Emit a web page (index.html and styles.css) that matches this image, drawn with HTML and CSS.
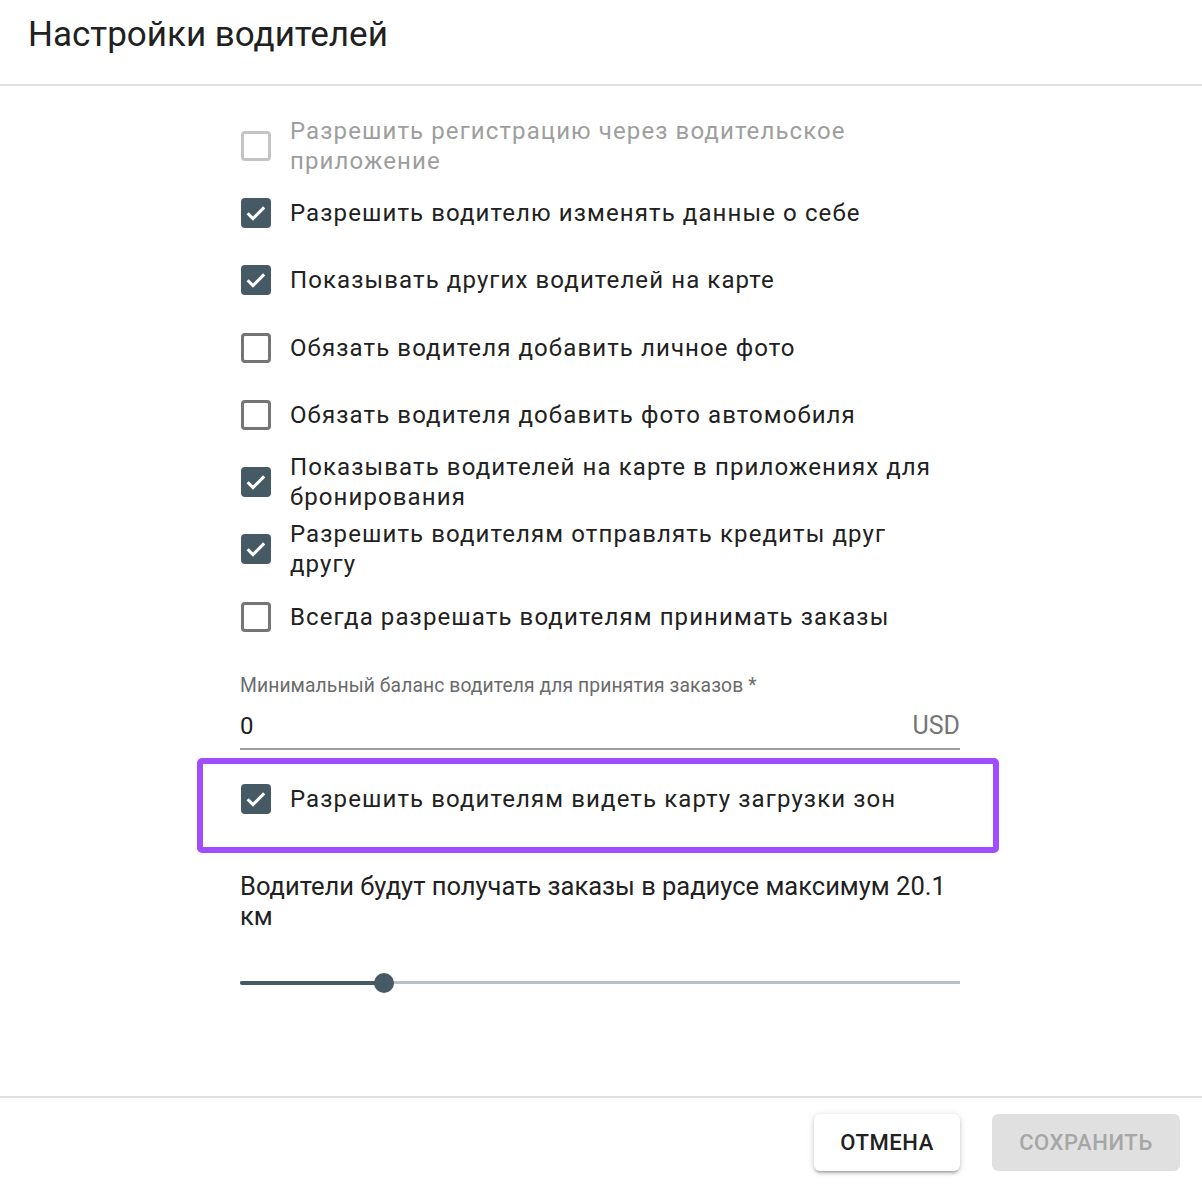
FILE: index.html
```html
<!DOCTYPE html>
<html lang="ru">
<head>
<meta charset="utf-8">
<title>Настройки водителей</title>
<link rel="stylesheet" href="styles.css">
</head>
<body>
<div class="dialog">
  <header class="head">
    <h1 class="title">Настройки водителей</h1>
  </header>
  <main class="content">
    <div class="col">
      <div class="row disabled">
        <span class="box"></span>
        <span class="label">Разрешить регистрацию через водительское приложение</span>
      </div>
      <div class="row">
        <span class="box checked"><svg viewBox="0 0 24 24"><path d="M4.8 12.2l4.6 4.6 9.6-9.6"/></svg></span>
        <span class="label">Разрешить водителю изменять данные о себе</span>
      </div>
      <div class="row">
        <span class="box checked"><svg viewBox="0 0 24 24"><path d="M4.8 12.2l4.6 4.6 9.6-9.6"/></svg></span>
        <span class="label">Показывать других водителей на карте</span>
      </div>
      <div class="row">
        <span class="box"></span>
        <span class="label">Обязать водителя добавить личное фото</span>
      </div>
      <div class="row">
        <span class="box"></span>
        <span class="label">Обязать водителя добавить фото автомобиля</span>
      </div>
      <div class="row">
        <span class="box checked"><svg viewBox="0 0 24 24"><path d="M4.8 12.2l4.6 4.6 9.6-9.6"/></svg></span>
        <span class="label">Показывать водителей на карте в приложениях для бронирования</span>
      </div>
      <div class="row">
        <span class="box checked"><svg viewBox="0 0 24 24"><path d="M4.8 12.2l4.6 4.6 9.6-9.6"/></svg></span>
        <span class="label">Разрешить водителям отправлять кредиты друг другу</span>
      </div>
      <div class="row">
        <span class="box"></span>
        <span class="label">Всегда разрешать водителям принимать заказы</span>
      </div>

      <div class="field">
        <div class="field-label">Минимальный баланс водителя для принятия заказов *</div>
        <div class="field-input">
          <span class="value">0</span>
          <span class="unit">USD</span>
        </div>
      </div>

      <div class="highlight">
        <div class="row">
          <span class="box checked"><svg viewBox="0 0 24 24"><path d="M4.8 12.2l4.6 4.6 9.6-9.6"/></svg></span>
          <span class="label">Разрешить водителям видеть карту загрузки зон</span>
        </div>
      </div>

      <p class="radius">Водители будут получать заказы в радиусе максимум 20.1 км</p>

      <div class="slider">
        <div class="track"></div>
        <div class="track-active" style="width: 20%"></div>
        <div class="thumb" style="left: 20%"></div>
      </div>
    </div>
  </main>
  <footer class="foot">
    <button class="btn btn-cancel">ОТМЕНА</button>
    <button class="btn btn-save" disabled>СОХРАНИТЬ</button>
  </footer>
</div>
</body>
</html>
```

FILE: styles.css
```css
* { box-sizing: border-box; }
html, body {
  margin: 0;
  padding: 0;
  background: #fff;
}
body {
  font-family: Roboto, "Liberation Sans", sans-serif;
  color: #212121;
}
.dialog {
  width: 1202px;
  height: 1188px;
  display: flex;
  flex-direction: column;
}
.head {
  height: 86px;
  border-bottom: 2px solid #e0e0e0;
  padding: 0 28px;
}
.title {
  margin: 0;
  font-size: 35px;
  font-weight: 400;
  line-height: 70px;
  color: #212121;
}
.content {
  flex: 1;
  padding: 26px 0 0 240px;
}
.col {
  width: 720px;
}
.row {
  height: 67.3px;
  display: flex;
  align-items: center;
  gap: 19px;
}
.box {
  flex: none;
  width: 30px;
  height: 30px;
  margin-left: 1px;
  border: 3px solid #757575;
  border-radius: 4px;
  display: flex;
  align-items: center;
  justify-content: center;
}
.box.checked {
  background: #455a64;
  border-color: #455a64;
}
.box svg {
  flex: none;
  width: 28px;
  height: 28px;
  fill: none;
  stroke: #fff;
  stroke-width: 2.6;
}
.disabled .box { border-color: #c4c4c4; }
.disabled .label { color: #9e9e9e; }
.label {
  max-width: 650px;
  font-size: 24px;
  line-height: 30px;
  letter-spacing: 1.1px;
  color: #212121;
}
.field {
  margin-top: 26px;
}
.field-label {
  font-size: 19.3px;
  line-height: 20px;
  color: #6b6b6b;
  letter-spacing: 0.1px;
}
.field-input {
  display: flex;
  justify-content: space-between;
  align-items: baseline;
  height: 54px;
  padding-top: 15px;
  border-bottom: 2px solid #9e9e9e;
}
.value {
  font-size: 24px;
  color: #212121;
}
.unit {
  font-size: 25px;
  color: #757575;
}
.highlight {
  margin: 8px -39px 0 -43px;
  border: 6px solid #a04cff;
  border-radius: 5px;
  padding: 1px 33px 14px 37px;
}
.radius {
  margin: 18px 0 0;
  font-size: 25.5px;
  line-height: 30px;
  color: #212121;
}
.slider {
  position: relative;
  height: 24px;
  margin-top: 40px;
}
.track {
  position: absolute;
  left: 0;
  right: 0;
  top: 10.5px;
  height: 3px;
  background: #b8c2c6;
}
.track-active {
  position: absolute;
  left: 0;
  top: 10px;
  height: 4px;
  background: #455a64;
  border-radius: 2px;
}
.thumb {
  position: absolute;
  top: 2px;
  width: 20px;
  height: 20px;
  margin-left: -10px;
  border-radius: 50%;
  background: #455a64;
}
.foot {
  height: 92px;
  border-top: 2px solid #e0e0e0;
  display: flex;
  justify-content: flex-end;
  align-items: flex-start;
  padding: 16px 22px 0 0;
  gap: 32px;
}
.btn {
  font-family: Roboto, "Liberation Sans", sans-serif;
  font-size: 22px;
  font-weight: 500;
  letter-spacing: 0.6px;
  height: 57px;
  border: none;
  border-radius: 6px;
  padding: 0 26px;
}
.btn-cancel {
  background: #fff;
  color: #212121;
  width: 146px;
  box-shadow: 0 3px 3px -2px rgba(0,0,0,0.3), 0 2px 4px rgba(0,0,0,0.14), 0 1px 8px rgba(0,0,0,0.1);
}
.btn-save {
  background: #e0e0e0;
  color: #a6a6a6;
  width: 188px;
}
```
